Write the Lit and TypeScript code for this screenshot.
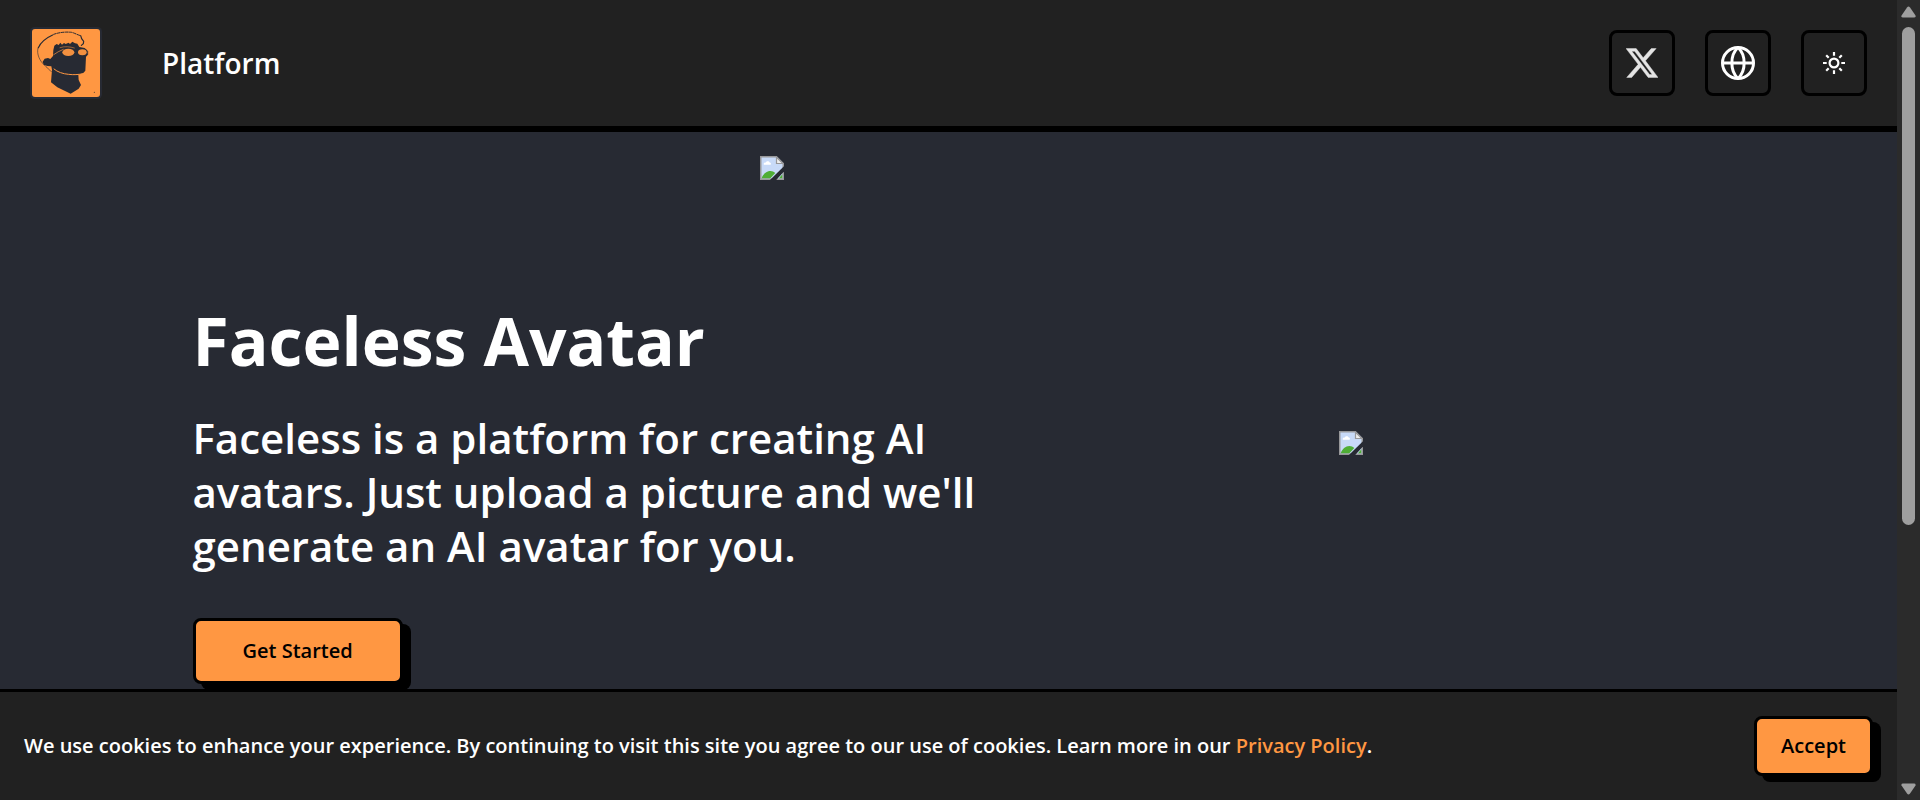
import { LitElement, html, css, svg } from "lit";
import { customElement, state } from "lit/decorators.js";

const logo = svg`
  <svg class="logo" viewBox="30 21 216 216" aria-hidden="true">
    <rect x="30" y="21" width="216" height="216" rx="14" fill="#272a33" />
    <rect x="36" y="27" width="204" height="204" rx="9" fill="#ff9742" />
    <path fill="#272a33" d="M100 90 L103 77 L110 72 L116 75 L121 68 L126 74 L132 69 L137 72 L146 68 L150 72 L157 65 L165 70 L172 71 L178 81 L194 84 L201 91 L203 104 L198 110 L196 152 L189 160 L175 164 L176 180 L183 195 L176 206 L152 221 L112 202 L93 187 L96 149 L94 139 L82 138 L71 134 L68 125 L74 116 L84 114 L91 117 L99 108 Z" />
    <g fill="none" stroke="#272a33" stroke-linecap="round">
      <path stroke-width="3.500" d="M55 83 C62 68 80 53 98 45" />
      <path stroke-width="1.800" d="M54 84 C49 103 60 123 72 134 C80 143 88 148 94 155" />
      <path stroke-width="3" stroke-dasharray="8 4" d="M101 43 C118 37 138 35 155 37 C166 40 173 45 182 47" />
      <path stroke-width="3.500" d="M182 47 L185 56 L191 64 L190 71 L184 76" />
      <path stroke-width="2.400" d="M196 88 L203 93 L203 104 L197 109" />
    </g>
    <ellipse cx="145" cy="97" rx="18" ry="11" fill="#f29040" />
    <ellipse cx="187" cy="97" rx="13" ry="9" fill="#f29040" />
    <g fill="none" stroke="#ff9742" stroke-linecap="round">
      <path stroke-width="2" d="M101 104 C109 98 120 92 130 88" />
      <path stroke-width="1.600" d="M120 83 C134 78 150 80 163 84" />
      <path stroke-width="3" d="M102 147 C112 156 130 162 146 163 C160 165 175 164 190 161" />
    </g>
    <circle cx="223" cy="217" r="1.500" fill="#272a33" />
  </svg>`;

const brokenImage = svg`
  <svg class="broken" viewBox="0 0 16 16" aria-hidden="true">
    <path fill="#c8daf8" d="M0 0h11l5 5v11H0z" />
    <path fill="#fff" d="M2.400 5.500c0-1 1-1.400 1.500-1.100.3-1.300 2.200-1.300 2.500 0 .9-.1 1.200 1.100.6 1.500H2.700z" />
    <path fill="#4fae36" d="M1 15c1-3 3.400-5 5.900-5 1.300 0 2.400.500 3.300 1.300L6.800 15z" />
    <path fill="#4fae36" d="M12.500 15l2.500-3V15z" />
    <path fill="none" stroke="#98989a" d="M.5.5h10.300l4.700 4.700v10.300H.5z" />
    <path fill="#eee" stroke="#98989a" stroke-width=".8" d="M11 .8v4.200h4.300z" />
    <path fill="#272a33" d="M16 6.800v3.600L10.800 16H6.600z" />
  </svg>`;

const xIcon = svg`
  <svg class="icon-x" viewBox="1.200 1.900 21.600 20.200" aria-hidden="true">
    <path fill="#e4e4e4" stroke="#e4e4e4" stroke-width=".3" d="M18.244 2.250h3.308l-7.227 8.260 8.502 11.240H16.170l-5.214-6.817L4.990 21.750H1.680l7.730-8.835L1.254 2.250H8.080l4.713 6.231zm-1.161 17.520h1.833L7.084 4.126H5.117z" />
  </svg>`;

const globeIcon = svg`
  <svg class="icon-globe" viewBox="-17 -17 34 34" aria-hidden="true">
    <g fill="none" stroke="#fff" stroke-width="3">
      <circle r="15.500" />
      <path d="M-15.500 0H15.500M0-15.500C-8.200-8-8.200 8 0 15.500C8.200 8 8.200-8 0-15.500Z" />
    </g>
  </svg>`;

const sunIcon = svg`
  <svg class="icon-sun" viewBox="-12 -12 24 24" aria-hidden="true">
    <g fill="none" stroke="#fff" stroke-width="2.200">
      <circle r="4.400" />
      <path d="M0-11V-7.300M0 11V7.300M-11 0H-7.300M11 0H7.300M-7.800-7.800L-5.300-5.300M7.800-7.800L5.300-5.300M-7.800 7.800L-5.300 5.300M7.800 7.800L5.300 5.300" />
    </g>
  </svg>`;

@customElement("app-root")
export class AppRoot extends LitElement {
  @state() private cookiesAccepted = false;

  static styles = css`
    :host {
      display: grid;
      grid-template-columns: minmax(0, 1fr) 23px;
      height: 100vh;
      overflow: hidden;
      background: #272a33;
      color: #fff;
      font-family: "Open Sans", "Noto Sans", sans-serif;
      font-weight: 600;
    }
    * {
      box-sizing: border-box;
    }
    .page {
      position: relative;
      overflow: hidden;
    }
    .header {
      display: flex;
      align-items: center;
      gap: 60px;
      padding: 27px 30px;
      background: #212121;
      border-bottom: 6px solid #000;
    }
    .home {
      display: block;
    }
    .logo {
      display: block;
      width: 72px;
      height: 72px;
    }
    .nav-link {
      color: inherit;
      font-size: 28px;
      line-height: 36px;
      text-decoration: none;
    }
    .actions {
      display: flex;
      gap: 30px;
      margin-left: auto;
    }
    .action {
      display: grid;
      place-items: center;
      width: 66px;
      height: 66px;
      padding: 0;
      border: 3px solid #000;
      border-radius: 8px;
      background: transparent;
      cursor: pointer;
    }
    .icon-x {
      width: 32px;
      height: 30px;
    }
    .icon-globe {
      width: 34px;
      height: 34px;
    }
    .icon-sun {
      width: 24px;
      height: 24px;
    }
    .broken {
      display: block;
      width: 24px;
      height: 24px;
    }
    .banner-image {
      width: 377px;
      margin: 24px auto 0;
    }
    .hero {
      display: grid;
      grid-template-columns: minmax(0, 1fr) 366px;
      max-width: 1512px;
      margin: 112px auto 0;
    }
    .title {
      margin: 0;
      font-size: 66px;
      line-height: 96px;
      font-weight: 700;
    }
    .lead {
      max-width: 840px;
      margin: 23px 0 45px;
      font-size: 42px;
      line-height: 54px;
    }
    .hero-image {
      margin: 139px 0 0;
    }
    .button {
      border: 3px solid #000;
      border-radius: 8px;
      background: #ff9742;
      box-shadow: 8px 6px 0 #000;
      color: #000;
      font: inherit;
      font-size: 20px;
      line-height: 30px;
      cursor: pointer;
    }
    .start {
      padding: 15px 47px;
    }
    .accept {
      padding: 12px 24px;
    }
    .cookies {
      position: absolute;
      inset: auto 0 0;
      display: flex;
      align-items: center;
      justify-content: space-between;
      padding: 24px;
      border-top: 3px solid #000;
      background: #212121;
    }
    .notice {
      margin: 0;
      font-size: 20px;
      line-height: 30px;
    }
    .policy {
      color: #ff9742;
      text-decoration: none;
    }
    .scrollbar {
      display: flex;
      flex-direction: column;
      align-items: center;
      justify-content: space-between;
      padding: 6px 0 5px;
      background: #2b2b2b;
    }
    .arrow {
      display: block;
      width: 15px;
      height: 12px;
    }
    .track {
      flex: 1;
      width: 13px;
      margin: 9px 0;
    }
    .thumb {
      height: calc(200% / 3);
      border-radius: 7px;
      background: #9f9f9f;
    }
  `;

  private acceptCookies() {
    this.cookiesAccepted = true;
  }

  render() {
    return html`
      <div class="page">
        <header class="header">
          <a class="home" href="#" aria-label="Home">${logo}</a>
          <a class="nav-link" href="#platform">Platform</a>
          <div class="actions">
            <button class="action" type="button" aria-label="X">${xIcon}</button>
            <button class="action" type="button" aria-label="Language">${globeIcon}</button>
            <button class="action" type="button" aria-label="Theme">${sunIcon}</button>
          </div>
        </header>
        <main>
          <div class="banner-image">${brokenImage}</div>
          <section class="hero">
            <div>
              <h1 class="title">Faceless Avatar</h1>
              <p class="lead">
                Faceless is a platform for creating AI avatars. Just upload a picture and we'll
                generate an AI avatar for you.
              </p>
              <button class="button start" type="button">Get Started</button>
            </div>
            <div class="hero-image">${brokenImage}</div>
          </section>
        </main>
        ${this.cookiesAccepted
          ? null
          : html`<footer class="cookies">
              <p class="notice">
                We use cookies to enhance your experience. By continuing to visit this site you
                agree to our use of cookies. Learn more in our
                <a class="policy" href="#privacy">Privacy Policy</a>.
              </p>
              <button class="button accept" type="button" @click=${this.acceptCookies}>
                Accept
              </button>
            </footer>`}
      </div>
      <div class="scrollbar" aria-hidden="true">
        <svg class="arrow" viewBox="0 0 15 12">
          <path fill="#9f9f9f" d="M6 1.500Q7.500-.5 9 1.500L14.500 9.500Q15 11.500 13 11.500H2Q0 11.500.5 9.500Z" />
        </svg>
        <div class="track"><div class="thumb"></div></div>
        <svg class="arrow" viewBox="0 0 15 12">
          <path fill="#9f9f9f" d="M6 10.500Q7.500 12.500 9 10.500L14.500 2.500Q15 .5 13 .5H2Q0 .5.5 2.500Z" />
        </svg>
      </div>
    `;
  }
}
